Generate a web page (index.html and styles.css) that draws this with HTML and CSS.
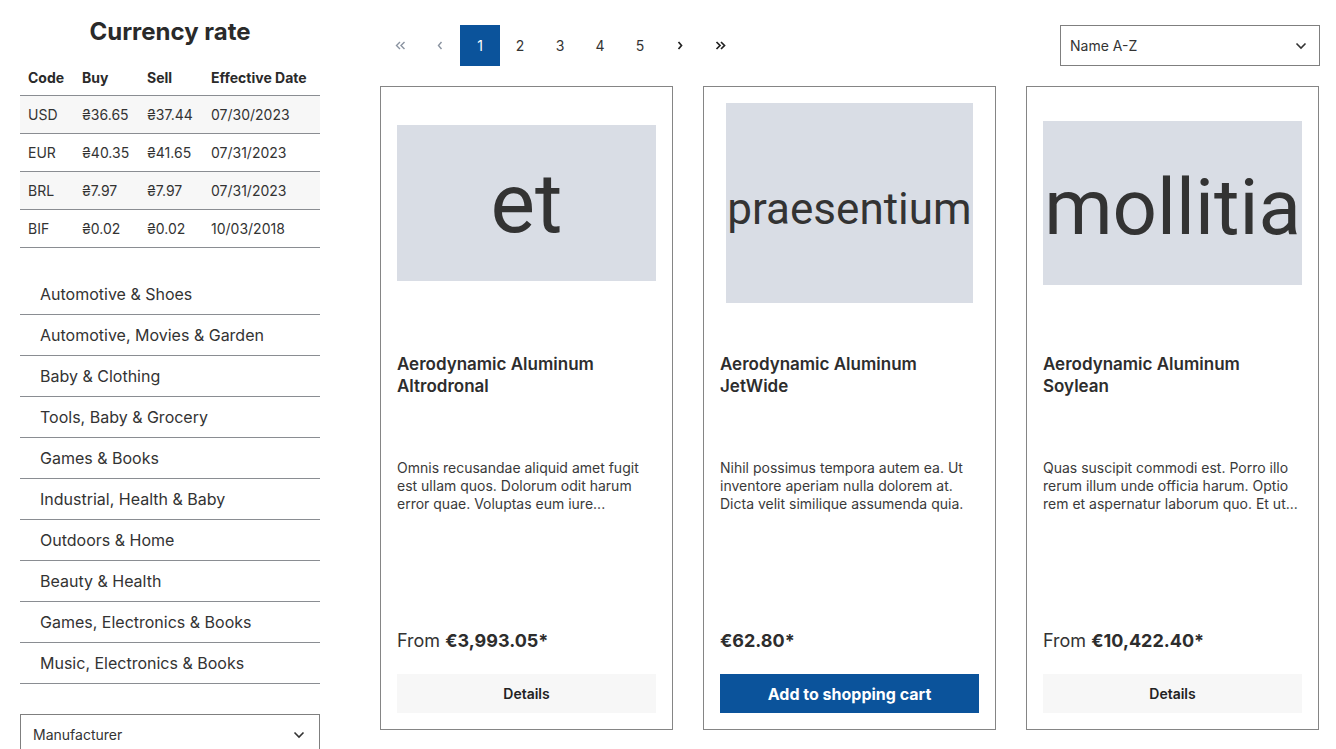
FILE: index.html
```html
<!DOCTYPE html>
<html lang="en">
<head>
<meta charset="utf-8">
<title>Listing</title>
<link rel="stylesheet" href="styles.css">
</head>
<body>
<div class="page">
  <aside class="sidebar">
    <h2 class="rate-title">Currency rate</h2>
    <table class="rates">
      <thead>
        <tr><th>Code</th><th>Buy</th><th>Sell</th><th>Effective Date</th></tr>
      </thead>
      <tbody>
        <tr><td>USD</td><td>₴36.65</td><td>₴37.44</td><td>07/30/2023</td></tr>
        <tr><td>EUR</td><td>₴40.35</td><td>₴41.65</td><td>07/31/2023</td></tr>
        <tr><td>BRL</td><td>₴7.97</td><td>₴7.97</td><td>07/31/2023</td></tr>
        <tr><td>BIF</td><td>₴0.02</td><td>₴0.02</td><td>10/03/2018</td></tr>
      </tbody>
    </table>
    <ul class="cats">
      <li>Automotive &amp; Shoes</li>
      <li>Automotive, Movies &amp; Garden</li>
      <li>Baby &amp; Clothing</li>
      <li>Tools, Baby &amp; Grocery</li>
      <li>Games &amp; Books</li>
      <li>Industrial, Health &amp; Baby</li>
      <li>Outdoors &amp; Home</li>
      <li>Beauty &amp; Health</li>
      <li>Games, Electronics &amp; Books</li>
      <li>Music, Electronics &amp; Books</li>
    </ul>
    <div class="select side-select">
      <span>Manufacturer</span>
      <svg class="chev" width="12" height="8" viewBox="0 0 12 8"><polyline points="1.5,1.5 6,6 10.5,1.5" fill="none" stroke="#333" stroke-width="1.6"/></svg>
    </div>
  </aside>
  <main class="main">
    <div class="toolbar">
      <nav class="pager">
        <span class="pg muted"><svg width="11" height="9" viewBox="0 0 11 9"><polyline points="5,1 1.5,4.5 5,8" fill="none" stroke="#8a93a0" stroke-width="1.4"/><polyline points="9.5,1 6,4.5 9.5,8" fill="none" stroke="#8a93a0" stroke-width="1.4"/></svg></span>
        <span class="pg muted"><svg width="6" height="9" viewBox="0 0 6 9"><polyline points="4.5,1 1.5,4.5 4.5,8" fill="none" stroke="#8a93a0" stroke-width="1.4"/></svg></span>
        <span class="pg active">1</span>
        <span class="pg">2</span>
        <span class="pg">3</span>
        <span class="pg">4</span>
        <span class="pg">5</span>
        <span class="pg"><svg width="6" height="9" viewBox="0 0 6 9"><polyline points="1.5,1 4.5,4.5 1.5,8" fill="none" stroke="#222" stroke-width="1.7"/></svg></span>
        <span class="pg"><svg width="11" height="9" viewBox="0 0 11 9"><polyline points="1.5,1 5,4.5 1.5,8" fill="none" stroke="#222" stroke-width="1.7"/><polyline points="6,1 9.5,4.5 6,8" fill="none" stroke="#222" stroke-width="1.7"/></svg></span>
      </nav>
      <div class="select sort-select">
        <span>Name A-Z</span>
        <svg class="chev" width="12" height="8" viewBox="0 0 12 8"><polyline points="1.5,1.5 6,6 10.5,1.5" fill="none" stroke="#333" stroke-width="1.6"/></svg>
      </div>
    </div>
    <div class="grid">
      <article class="card">
        <div class="media"><div class="ph ph-et">et</div></div>
        <h3 class="name">Aerodynamic Aluminum Altrodronal</h3>
        <p class="desc">Omnis recusandae aliquid amet fugit est ullam quos. Dolorum odit harum error quae. Voluptas eum iure...</p>
        <div class="price">From <b>€3,993.05*</b></div>
        <button class="btn btn-light">Details</button>
      </article>
      <article class="card">
        <div class="media"><div class="ph ph-pr">praesentium</div></div>
        <h3 class="name">Aerodynamic Aluminum JetWide</h3>
        <p class="desc">Nihil possimus tempora autem ea. Ut inventore aperiam nulla dolorem at. Dicta velit similique assumenda quia.</p>
        <div class="price"><b>€62.80*</b></div>
        <button class="btn btn-primary">Add to shopping cart</button>
      </article>
      <article class="card">
        <div class="media"><div class="ph ph-mo">mollitia</div></div>
        <h3 class="name">Aerodynamic Aluminum Soylean</h3>
        <p class="desc">Quas suscipit commodi est. Porro illo rerum illum unde officia harum. Optio rem et aspernatur laborum quo. Et ut...</p>
        <div class="price">From <b>€10,422.40*</b></div>
        <button class="btn btn-light">Details</button>
      </article>
    </div>
  </main>
</div>
</body>
</html>
```

FILE: styles.css
```css
* { box-sizing: border-box; }
html, body { margin: 0; padding: 0; background: #fff; }
body {
  font-family: Inter, "Noto Sans", "Liberation Sans", sans-serif;
  color: #333;
  font-size: 14px;
  overflow: hidden;
}
.page {
  display: flex;
  gap: 60px;
  padding-left: 20px;
  width: 1336px;
  height: 749px;
}
.sidebar {
  width: 300px;
  flex: none;
}
.rate-title {
  margin: 17px 0 14px;
  text-align: center;
  font-size: 24px;
  line-height: 30px;
  font-weight: 700;
  color: #2a2a2a;
}
.rates {
  width: 100%;
  border-collapse: collapse;
  font-size: 14px;
}
.rates th {
  text-align: left;
  font-weight: 700;
  padding: 6px 8px 7px;
  line-height: 21px;
  border-bottom: 1px solid #8a8d92;
  color: #2a2a2a;
}
.rates td {
  padding: 8px 8px;
  line-height: 21px;
  border-bottom: 1px solid #8a8d92;
}
.rates tbody tr:nth-child(odd) td { background: #f7f7f7; }
.rates th:nth-child(1), .rates td:nth-child(1) { width: 54px; }
.rates th:nth-child(2), .rates td:nth-child(2) { width: 65px; }
.rates th:nth-child(3), .rates td:nth-child(3) { width: 64px; }

.cats {
  list-style: none;
  margin: 26px 0 0;
  padding: 0;
}
.cats li {
  font-size: 16px;
  line-height: 24px;
  padding: 8px 20px 8px 20px;
  border-bottom: 1px solid #8a8d92;
  color: #333;
}
.select {
  display: flex;
  align-items: center;
  justify-content: space-between;
  border: 1px solid #7f7f7f;
  height: 41px;
  font-size: 14px;
  color: #333;
}
.side-select {
  margin-top: 30px;
  padding: 0 14px 0 12px;
}
.main {
  width: 940px;
  flex: none;
}
.toolbar {
  display: flex;
  justify-content: space-between;
  align-items: center;
  margin-top: 25px;
}
.pager {
  display: flex;
}
.pg {
  width: 40px;
  height: 41px;
  display: flex;
  align-items: center;
  justify-content: center;
  font-size: 14px;
  color: #333;
}
.pg.active {
  background: #0b539b;
  color: #fff;
}
.sort-select {
  width: 260px;
  padding: 0 12px 0 9px;
}
.grid {
  display: grid;
  grid-template-columns: repeat(3, 293px);
  gap: 30px;
  margin-top: 20px;
}
.card {
  border: 1px solid #858585;
  padding: 16px;
  display: flex;
  flex-direction: column;
  height: 644px;
}
.media {
  height: 200px;
  display: flex;
  align-items: center;
  justify-content: center;
}
.ph {
  background: #d9dde5;
  color: #333;
  font-family: Roboto, "Liberation Sans", sans-serif;
  display: flex;
  align-items: center;
  justify-content: center;
  overflow: hidden;
  white-space: nowrap;
}
.ph-et { width: 259px; height: 156px; font-size: 84px; }
.ph-pr { width: 247px; height: 200px; font-size: 44px; padding-top: 12px; }
.ph-mo { width: 259px; height: 164px; font-size: 78px; padding-top: 8px; }
.name {
  margin: 50px 0 0;
  font-size: 17px;
  line-height: 22px;
  font-weight: 600;
  color: #2d2d2d;
  min-height: 44px;
}
.desc {
  margin: 62px 0 0;
  font-size: 14px;
  line-height: 18px;
  color: #3a3a3a;
}
.price {
  margin-top: auto;
  font-size: 18px;
  line-height: 26px;
  color: #333;
}
.price b { font-weight: 700; color: #2d2d2d; }
.btn {
  margin-top: 20px;
  height: 39px;
  border: 0;
  font-family: Inter, "Noto Sans", "Liberation Sans", sans-serif;
  font-weight: 600;
  width: 100%;
}
.btn-light {
  background: #f7f7f7;
  color: #222;
  font-size: 14px;
}
.btn-primary {
  background: #0b539b;
  color: #fff;
  font-size: 16px;
  font-weight: 700;
}
```
